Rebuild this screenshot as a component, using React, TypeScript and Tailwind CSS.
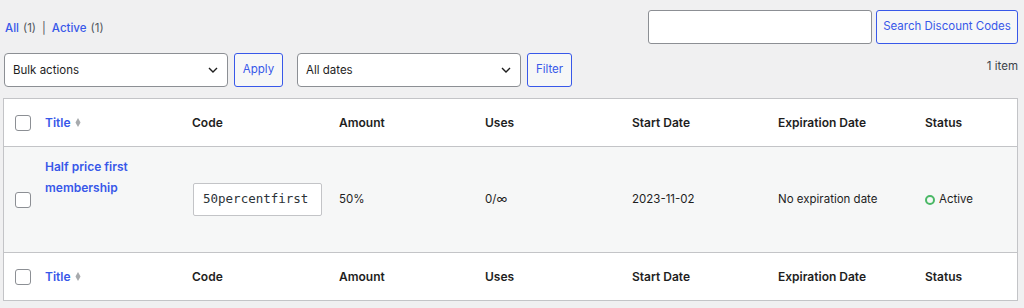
import React from "react";

const BLUE = "text-[#3858e9]";

function Checkbox() {
  return <div className="w-4 h-4 border border-[#8c8f94] rounded-[3px] bg-white" />;
}

function Chevron() {
  return (
    <svg width="12" height="12" viewBox="0 0 12 12" className="text-[#1e1e1e]">
      <path d="M2 4 L6 8 L10 4" fill="none" stroke="currentColor" strokeWidth="1.4" />
    </svg>
  );
}

function Select({ label }: { label: string }) {
  return (
    <div className="w-[224px] h-[34px] border border-[#8c8f94] rounded-[4px] bg-white flex items-center justify-between pl-[8px] pr-[8px] text-[11.5px] text-[#1e1e1e]">
      <span className="pt-[1px]">{label}</span>
      <Chevron />
    </div>
  );
}

function Btn({ label, w }: { label: string; w: string }) {
  return (
    <div className={`h-[34px] ${w} border border-[#3858e9] rounded-[3px] bg-[#f6f7f7] flex items-center justify-center text-[11.5px] ${BLUE}`}>
      {label}
    </div>
  );
}

function SortIcon() {
  return (
    <svg width="6" height="9" viewBox="0 0 6 9" className="ml-[4px]">
      <path d="M3 0 L5.5 4.5 L3 9 L0.5 4.5 Z" fill="#a7aaad" />
    </svg>
  );
}

const cols = "grid grid-cols-[33px_147px_147px_146px_147px_146px_147px_1fr]";

function HeadRow({ bottomBorder }: { bottomBorder: boolean }) {
  const h = "font-semibold text-[12px] text-[#1e1e1e] pl-[8px]";
  return (
    <div className={`${cols} h-[48px] items-center bg-white ${bottomBorder ? "border-b border-[#c3c4c7]" : "border-t border-[#c3c4c7]"}`}>
      <div className="pl-[11px]"><Checkbox /></div>
      <div className={`pl-[8px] flex items-center font-semibold text-[12px] ${BLUE}`}>Title<SortIcon /></div>
      <div className={h}>Code</div>
      <div className={h}>Amount</div>
      <div className={h}>Uses</div>
      <div className={h}>Start Date</div>
      <div className={h}>Expiration Date</div>
      <div className={h}>Status</div>
    </div>
  );
}

export default function App() {
  const cell = "pl-[8px] text-[11.5px] text-[#1e1e1e]";
  return (
    <div className="w-[1024px] h-[308px] bg-[#f0f0f1] pl-[3px] pr-[6px] pt-[10px] font-['Inter',_'Liberation_Sans',_sans-serif] overflow-hidden">
      <div className="flex items-center justify-between h-[34px]">
        <div className="pl-[2px] pt-[4px] text-[11.5px] text-[#50575e] flex items-center">
          <span className={`${BLUE} font-medium`}>All</span>
          <span className="ml-[4px]">(1)</span>
          <span className="mx-[6px] text-[#50575e]">|</span>
          <span className={`${BLUE} font-medium`}>Active</span>
          <span className="ml-[4px]">(1)</span>
        </div>
        <div className="flex items-center gap-[4px]">
          <div className="w-[224px] h-[34px] border border-[#8c8f94] rounded-[3px] bg-white" />
          <Btn label="Search Discount Codes" w="w-[142px]" />
        </div>
      </div>
      <div className="flex justify-between mt-[9px] h-[34px]">
        <div className="flex items-center pl-[1px]">
          <Select label="Bulk actions" />
          <div className="ml-[6px]"><Btn label="Apply" w="w-[49px]" /></div>
          <div className="ml-[14px]"><Select label="All dates" /></div>
          <div className="ml-[6px]"><Btn label="Filter" w="w-[45px]" /></div>
        </div>
        <div className="pt-[5px] text-[11.5px] text-[#3c434a]">1 item</div>
      </div>
      <div className="mt-[11px] border border-[#c3c4c7] w-[1015px]">
        <HeadRow bottomBorder />
        <div className={`${cols} h-[105px] items-center bg-[#f6f7f7]`}>
          <div className="pl-[11px]"><Checkbox /></div>
          <div className={`self-start pt-[9px] pl-[8px] pr-[8px] font-semibold text-[12px] leading-[21px] ${BLUE}`}>
            Half price first<br />membership
          </div>
          <div className="pl-[9px]">
            <div className="w-[129px] h-[33px] border border-[#c3c4c7] rounded-[2px] bg-white flex items-center pl-[9px] font-['DejaVu_Sans_Mono',_monospace] text-[12.5px] text-[#2c3338]">
              50percentfirst
            </div>
          </div>
          <div className={cell}>50%</div>
          <div className={cell}>0/∞</div>
          <div className={cell}>2023-11-02</div>
          <div className={cell}>No expiration date</div>
          <div className={`${cell} flex items-center`}>
            <span className="w-[10px] h-[10px] rounded-full border-2 border-[#4ab866] mr-[4px]" />
            Active
          </div>
        </div>
        <HeadRow bottomBorder={false} />
      </div>
    </div>
  );
}
